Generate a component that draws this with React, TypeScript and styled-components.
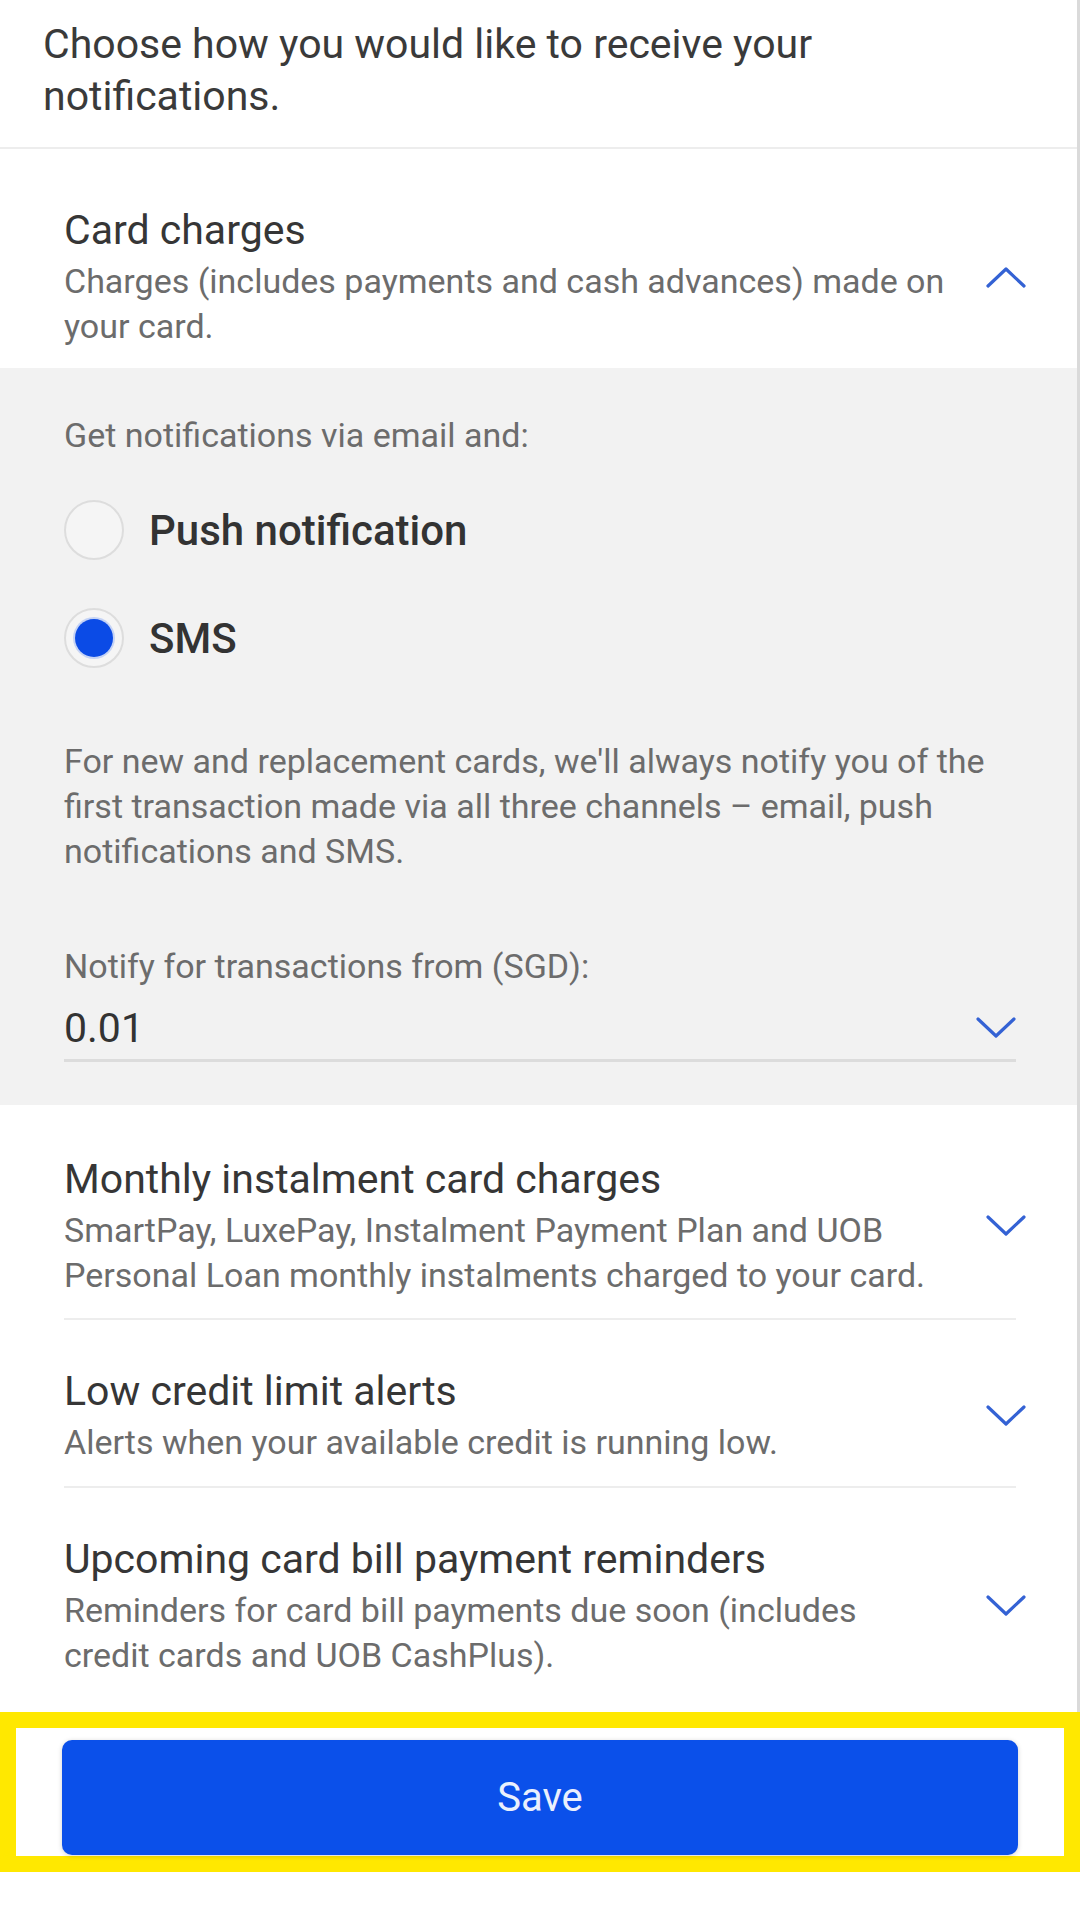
import React from 'react';
import styled, { createGlobalStyle } from 'styled-components';

const GlobalStyle = createGlobalStyle`
  html, body {
    margin: 0;
    padding: 0;
    background: #ffffff;
  }
  body {
    font-family: Roboto, 'Noto Sans', Arial, sans-serif;
    -webkit-font-smoothing: antialiased;
  }
  * {
    box-sizing: border-box;
  }
`;

const Page = styled.div`
  width: 1080px;
  min-height: 1920px;
  background: #ffffff;
  display: flex;
  flex-direction: column;
`;

// scrollable content, with the thin frame edge on the right
const Content = styled.div`
  width: 1080px;
  border-right: 3px solid #dadada;
  display: flex;
  flex-direction: column;
`;

const Intro = styled.p`
  margin: 0;
  padding: 18px 43px 25px;
  font-size: 41px;
  line-height: 52px;
  color: #3a3a3a;
`;

const Divider = styled.div<{ $inset?: boolean }>`
  height: 2px;
  background: #ededed;
  margin: ${({ $inset }) => ($inset ? '0 61px 0 64px' : '0')};
`;

const SectionHeader = styled.div<{ $top: number; $bottom: number }>`
  display: flex;
  align-items: center;
  padding: ${({ $top, $bottom }) => `${$top}px 51px ${$bottom}px 64px`};
`;

const HeaderText = styled.div`
  width: 884px;
  display: flex;
  flex-direction: column;
  gap: 4px;
`;

const Title = styled.div`
  font-size: 41px;
  line-height: 50px;
  color: #363636;
`;

const Desc = styled.div`
  font-size: 34px;
  line-height: 45px;
  color: #6c6c6c;
`;

const ChevronBox = styled.div`
  margin-left: auto;
  width: 40px;
  height: 22px;
  display: flex;
  align-items: center;
  justify-content: center;
`;

const Panel = styled.div`
  background: #f2f2f2;
  padding: 45px 61px 43px 64px;
  display: flex;
  flex-direction: column;
`;

const Lead = styled(Desc)`
  margin-bottom: 42px;
`;

const RadioGroup = styled.div`
  display: flex;
  flex-direction: column;
  gap: 48px;
`;

const RadioRow = styled.label`
  display: flex;
  align-items: center;
  gap: 25px;
  height: 60px;
`;

const RadioCircle = styled.span<{ $checked?: boolean }>`
  width: 60px;
  height: 60px;
  border-radius: 50%;
  border: 2px solid #dddddd;
  background: #f5f5f5;
  display: flex;
  align-items: center;
  justify-content: center;
  flex-shrink: 0;

  &::after {
    content: '';
    width: 38px;
    height: 38px;
    border-radius: 50%;
    background: ${({ $checked }) => ($checked ? '#0b4be6' : 'transparent')};
    box-shadow: ${({ $checked }) =>
      $checked ? '0 0 0 2px rgba(110, 150, 245, 0.35)' : 'none'};
  }
`;

const RadioLabel = styled.span`
  font-size: 42px;
  font-weight: 500;
  color: #333333;
`;

const Note = styled(Desc)`
  margin-top: 71px;
`;

const FieldLabel = styled(Desc)`
  margin-top: 70px;
`;

const SelectRow = styled.div`
  margin-top: 14px;
  padding-bottom: 6px;
  border-bottom: 3px solid #dcdcdc;
  display: flex;
  align-items: center;
  justify-content: space-between;
`;

const SelectValue = styled.div`
  font-size: 41px;
  line-height: 50px;
  color: #333333;
`;

const Footer = styled.div`
  border: 16px solid #ffe800;
  padding: 12px 46px 1px 46px;
  background: #ffffff;
`;

const SaveButton = styled.button`
  width: 100%;
  height: 115px;
  border: none;
  border-radius: 10px;
  background: #0b50ea;
  box-shadow: 0 1px 5px rgba(0, 0, 0, 0.18);
  color: #eaf0fd;
  font-family: Roboto, 'Noto Sans', Arial, sans-serif;
  font-size: 40px;
  cursor: pointer;
`;

function Chevron({ up }: { up?: boolean }) {
  return (
    <svg width="40" height="22" viewBox="0 0 40 22" fill="none">
      <path
        d={up ? 'M2 20 L20 3 L38 20' : 'M2 2 L20 19 L38 2'}
        stroke="#3462d4"
        strokeWidth="3.2"
        strokeLinecap="round"
        strokeLinejoin="round"
      />
    </svg>
  );
}

type Category = {
  title: string;
  desc: string;
  top: number;
  bottom: number;
  divider: boolean;
};

const collapsed: Category[] = [
  {
    title: 'Monthly instalment card charges',
    desc: 'SmartPay, LuxePay, Instalment Payment Plan and UOB Personal Loan monthly instalments charged to your card.',
    top: 49,
    bottom: 20,
    divider: true,
  },
  {
    title: 'Low credit limit alerts',
    desc: 'Alerts when your available credit is running low.',
    top: 46,
    bottom: 21,
    divider: true,
  },
  {
    title: 'Upcoming card bill payment reminders',
    desc: 'Reminders for card bill payments due soon (includes credit cards and UOB CashPlus).',
    top: 46,
    bottom: 34,
    divider: false,
  },
];

export default function App() {
  return (
    <Page>
      <GlobalStyle />
      <Content>
        <Intro>Choose how you would like to receive your notifications.</Intro>
        <Divider />

        {/* Expanded section */}
        <SectionHeader $top={56} $bottom={19}>
          <HeaderText>
            <Title>Card charges</Title>
            <Desc>
              Charges (includes payments and cash advances) made on your card.
            </Desc>
          </HeaderText>
          <ChevronBox>
            <Chevron up />
          </ChevronBox>
        </SectionHeader>
        <Panel>
          <Lead>Get notifications via email and:</Lead>
          <RadioGroup>
            <RadioRow>
              <RadioCircle />
              <RadioLabel>Push notification</RadioLabel>
            </RadioRow>
            <RadioRow>
              <RadioCircle $checked />
              <RadioLabel>SMS</RadioLabel>
            </RadioRow>
          </RadioGroup>
          <Note>
            For new and replacement cards, we'll always notify you of the first
            transaction made via all three channels – email, push notifications
            and SMS.
          </Note>
          <FieldLabel>Notify for transactions from (SGD):</FieldLabel>
          <SelectRow>
            <SelectValue>0.01</SelectValue>
            <Chevron />
          </SelectRow>
        </Panel>

        {/* Collapsed sections */}
        {collapsed.map((c) => (
          <React.Fragment key={c.title}>
            <SectionHeader $top={c.top} $bottom={c.bottom}>
              <HeaderText>
                <Title>{c.title}</Title>
                <Desc>{c.desc}</Desc>
              </HeaderText>
              <ChevronBox>
                <Chevron />
              </ChevronBox>
            </SectionHeader>
            {c.divider && <Divider $inset />}
          </React.Fragment>
        ))}
      </Content>

      <Footer>
        <SaveButton>Save</SaveButton>
      </Footer>
    </Page>
  );
}
